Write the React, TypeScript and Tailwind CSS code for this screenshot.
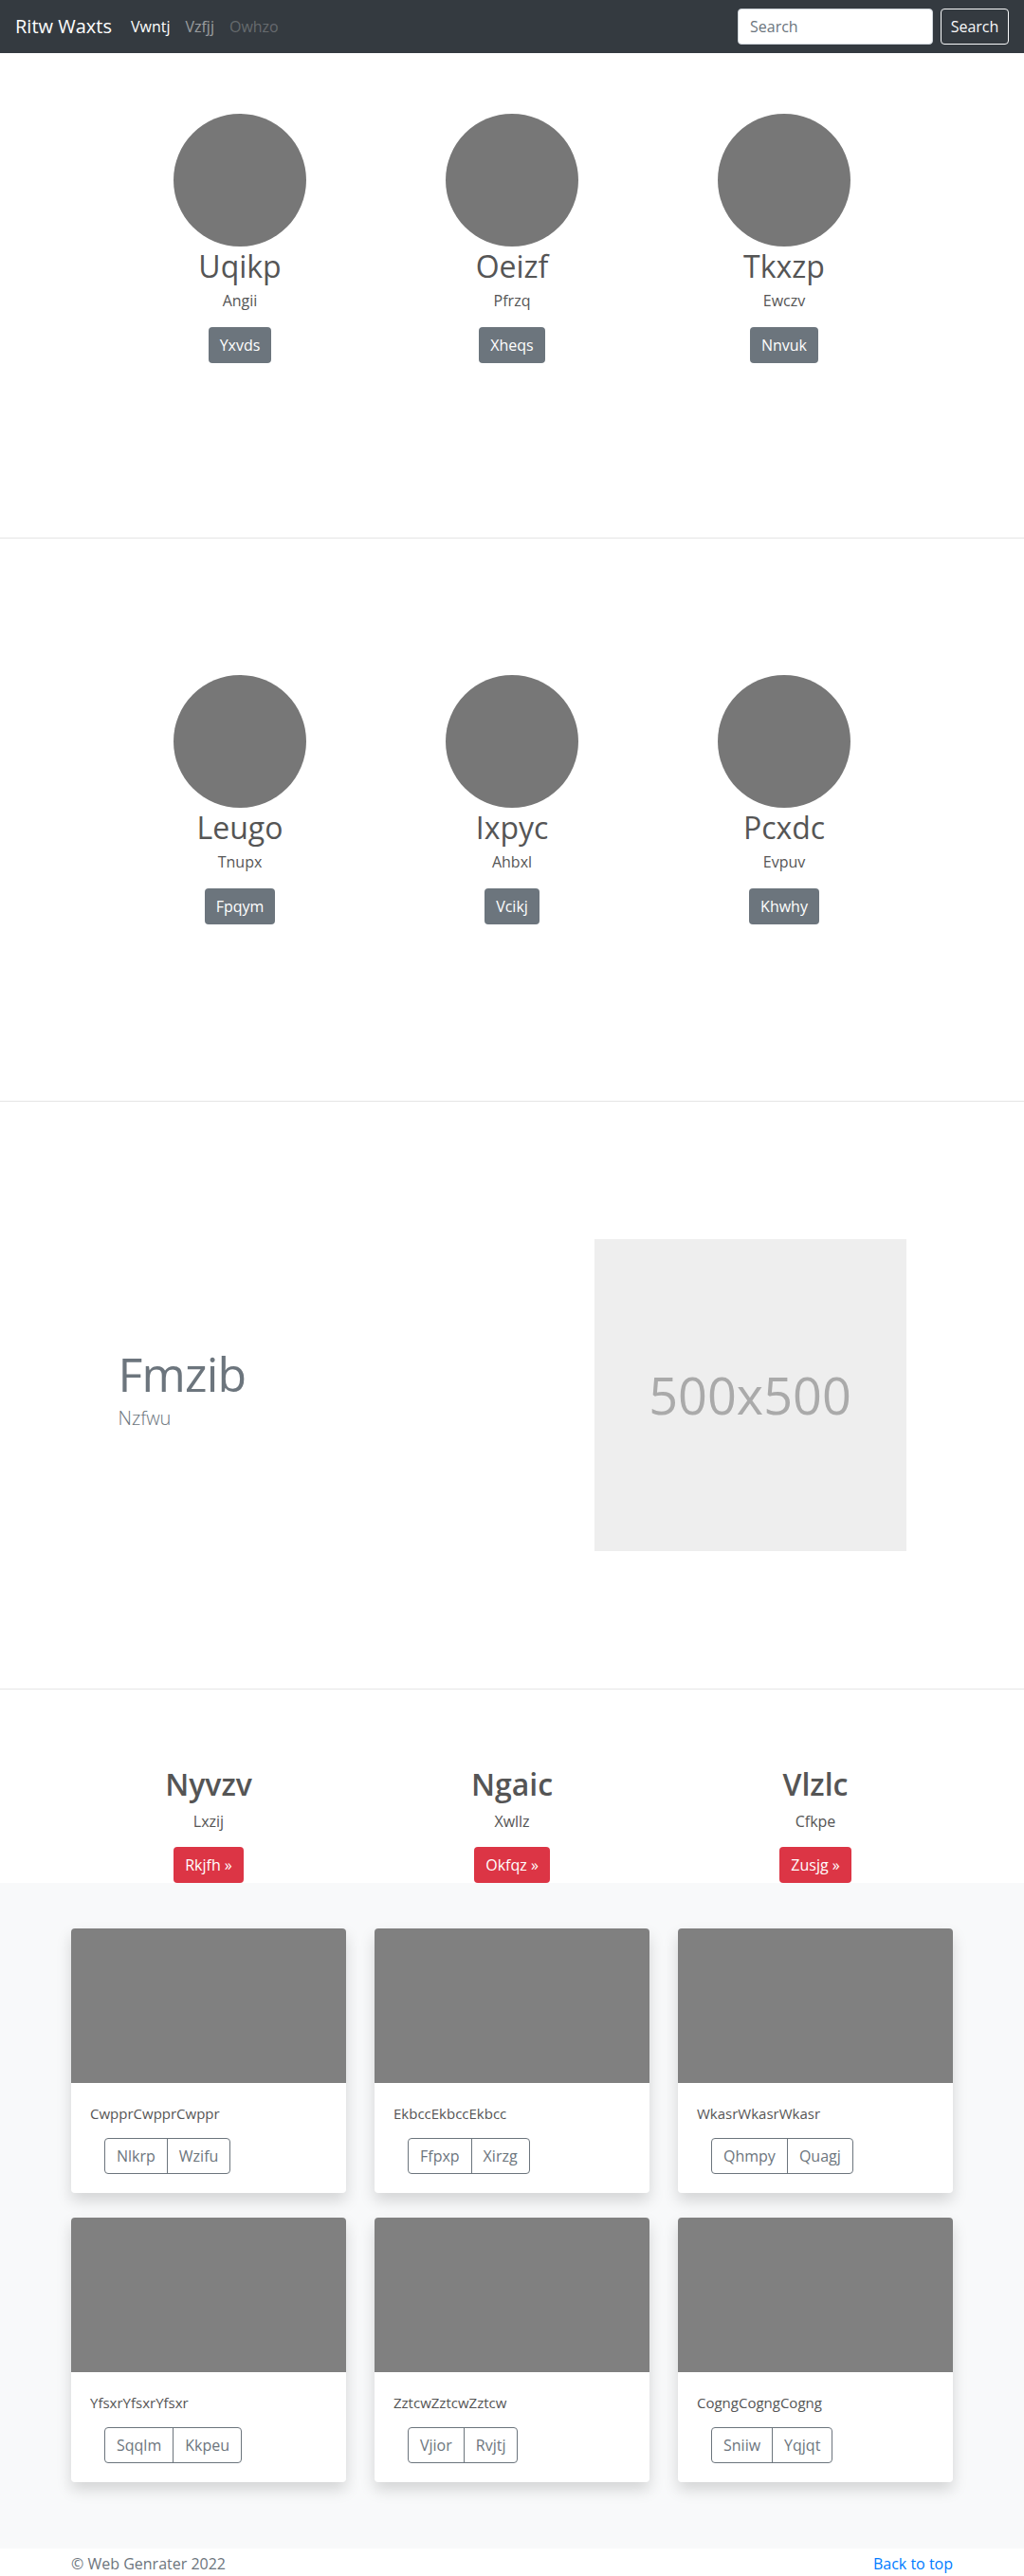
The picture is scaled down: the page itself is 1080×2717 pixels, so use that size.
import React from 'react';

type Person = { name: string; sub: string; btn: string };

const teamTop: Person[] = [
  { name: 'Uqikp', sub: 'Angii', btn: 'Yxvds' },
  { name: 'Oeizf', sub: 'Pfrzq', btn: 'Xheqs' },
  { name: 'Tkxzp', sub: 'Ewczv', btn: 'Nnvuk' },
];

const teamBottom: Person[] = [
  { name: 'Leugo', sub: 'Tnupx', btn: 'Fpqym' },
  { name: 'Ixpyc', sub: 'Ahbxl', btn: 'Vcikj' },
  { name: 'Pcxdc', sub: 'Evpuv', btn: 'Khwhy' },
];

const promos = [
  { title: 'Nyvzv', sub: 'Lxzij', btn: 'Rkjfh' },
  { title: 'Ngaic', sub: 'Xwllz', btn: 'Okfqz' },
  { title: 'Vlzlc', sub: 'Cfkpe', btn: 'Zusjg' },
];

const cards = [
  { text: 'CwpprCwpprCwppr', a: 'Nlkrp', b: 'Wzifu' },
  { text: 'EkbccEkbccEkbcc', a: 'Ffpxp', b: 'Xirzg' },
  { text: 'WkasrWkasrWkasr', a: 'Qhmpy', b: 'Quagj' },
  { text: 'YfsxrYfsxrYfsxr', a: 'Sqqlm', b: 'Kkpeu' },
  { text: 'ZztcwZztcwZztcw', a: 'Vjior', b: 'Rvjtj' },
  { text: 'CogngCogngCogng', a: 'Sniiw', b: 'Yqjqt' },
];

function TeamRow({ people }: { people: Person[] }) {
  return (
    <div className="w-[861px] mx-auto grid grid-cols-3">
      {people.map((p) => (
        <div key={p.name} className="px-[15px] flex flex-col items-center text-center">
          {/* placeholder avatar */}
          <div className="w-[140px] h-[140px] rounded-full bg-[#777]" />
          <h2 className="mt-[2px] text-[32px] leading-[38px] font-normal text-[#555]">{p.name}</h2>
          <p className="mt-[5px] text-base leading-6 text-[#555]">{p.sub}</p>
          <a className="mt-[16px] h-[38px] px-3 flex items-center rounded bg-[#6c757d] text-white text-base">
            {p.btn}
          </a>
        </div>
      ))}
    </div>
  );
}

export default function App() {
  return (
    <div className="font-['Segoe_UI','Open_Sans','Noto_Sans',sans-serif] bg-white text-[#555]">
      {/* Navbar */}
      <nav className="h-14 bg-[#343a40] flex items-center justify-between px-4">
        <div className="flex items-center">
          <a className="text-xl text-white mr-3 leading-[30px]">Ritw Waxts</a>
          <a className="px-2 text-base text-white">Vwntj</a>
          <a className="px-2 text-base text-white/50">Vzfjj</a>
          <a className="px-2 text-base text-white/25">Owhzo</a>
        </div>
        <div className="flex items-center">
          <input
            placeholder="Search"
            className="w-[206px] h-[38px] rounded bg-white px-3 text-base text-[#495057] placeholder:text-[#6c757d] border border-[#ced4da] mr-2 outline-none"
          />
          <button className="h-[38px] w-[72px] rounded border border-[#f8f9fa] text-[#f8f9fa] text-base">
            Search
          </button>
        </div>
      </nav>

      {/* Team 1 */}
      <section className="pt-16 h-[512px] border-b border-[#e5e5e5]">
        <TeamRow people={teamTop} />
      </section>

      {/* Team 2 */}
      <section className="pt-[144px] h-[594px] border-b border-[#e5e5e5]">
        <TeamRow people={teamBottom} />
      </section>

      {/* Featurette */}
      <section className="py-[145px] border-b border-[#e5e5e5]">
        <div className="w-[861px] mx-auto flex items-center">
          <div className="w-[502px] px-[15px] -mt-[10px]">
            <h2 className="text-[50px] leading-none tracking-[-0.8px] text-[#6c757d] font-normal">Fmzib</h2>
            <p className="mt-2 text-xl font-light text-[#6c757d]">Nzfwu</p>
          </div>
          <div className="w-[359px] px-[15px]">
            <div className="w-[329px] h-[329px] bg-[#eee] flex items-center justify-center">
              <span className="text-[54px] text-[#aaa]">500x500</span>
            </div>
          </div>
        </div>
      </section>

      {/* Promo columns */}
      <section className="pt-[81px]">
        <div className="w-[960px] mx-auto grid grid-cols-3">
          {promos.map((p) => (
            <div key={p.title} className="px-[15px] flex flex-col items-center text-center">
              <h2 className="text-[32px] leading-[38px] font-semibold text-[#555]">{p.title}</h2>
              <p className="mt-2 text-base leading-6 text-[#555]">{p.sub}</p>
              <a className="mt-[15px] h-[38px] px-3 flex items-center rounded bg-[#dc3545] text-white text-base">
                {p.btn} »
              </a>
            </div>
          ))}
        </div>
      </section>

      {/* Album */}
      <section className="bg-[#f8f9fa] pt-12 pb-[44px]">
        <div className="w-[960px] mx-auto grid grid-cols-3">
          {cards.map((c) => (
            <div key={c.text} className="px-[15px] mb-[26px]">
              <div className="bg-white rounded overflow-hidden shadow-[0_8px_16px_rgba(0,0,0,0.15)]">
                <div className="h-[163px] bg-[#808080]" />
                <div className="px-5 pt-[20px] pb-5">
                  <p className="text-[15px] leading-6 text-[#555]">{c.text}</p>
                  <div className="mt-[14px] ml-[15px] inline-flex h-[38px] rounded border border-[#6c757d] text-[#6c757d] text-base">
                    <button className="px-3">{c.a}</button>
                    <button className="px-3 border-l border-[#6c757d]">{c.b}</button>
                  </div>
                </div>
              </div>
            </div>
          ))}
        </div>
      </section>

      {/* Footer */}
      <footer className="pt-1 pb-6">
        <div className="w-[930px] mx-auto flex justify-between text-base leading-6">
          <p className="text-[#6c757d]">© Web Genrater 2022</p>
          <a className="text-[#007bff]">Back to top</a>
        </div>
      </footer>
    </div>
  );
}
